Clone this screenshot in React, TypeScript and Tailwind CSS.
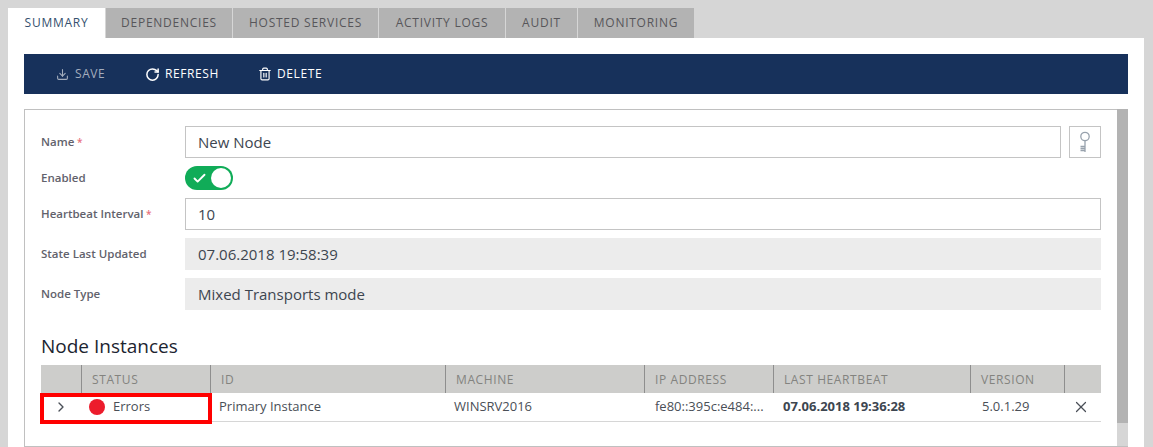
import React from 'react';
import { Check, Download, RotateCw, Trash2, X, ChevronRight } from 'lucide-react';

const font = "font-['Open_Sans','Noto_Sans',sans-serif]";

const tabs = [
  { label: 'SUMMARY', width: 'w-[98px]', active: true },
  { label: 'DEPENDENCIES', width: 'w-[127px]' },
  { label: 'HOSTED SERVICES', width: 'w-[146px]' },
  { label: 'ACTIVITY LOGS', width: 'w-[127px]' },
  { label: 'AUDIT', width: 'w-[72px]' },
  { label: 'MONITORING', width: 'w-[116px]' },
];

const columns = [
  { label: '', cell: 'w-[41px]' },
  { label: 'STATUS', cell: 'w-[129px]' },
  { label: 'ID', cell: 'w-[235px]' },
  { label: 'MACHINE', cell: 'w-[199px]' },
  { label: 'IP ADDRESS', cell: 'w-[129px]' },
  { label: 'LAST HEARTBEAT', cell: 'w-[197px]' },
  { label: 'VERSION', cell: 'w-[94px]' },
  { label: '', cell: 'w-[36px]' },
];

const KeyIcon = () => (
  <svg width="14" height="24" viewBox="0 0 14 24" fill="none" stroke="#98a2ad" strokeWidth="1.3">
    <circle cx="7" cy="6.5" r="4.2" />
    <path d="M7 10.7V22M2.5 16.5H7M2.5 18.5H7M2.5 20.5H7" />
  </svg>
);

const Label = ({ text, required }: { text: string; required?: boolean }) => (
  <div className="w-[144px] shrink-0 text-[11.5px] font-semibold text-[#62626c]">
    {text}
    {required && <span className="text-[10px] text-[#e8707b]"> *</span>}
  </div>
);

const TextField = ({ value }: { value: string }) => (
  <div className="flex h-[32px] flex-1 items-center border border-[#c4c4c4] pl-[12px] text-[15px] text-[#3d4650]">
    {value}
  </div>
);

const ReadonlyField = ({ value }: { value: string }) => (
  <div className="flex h-[32px] flex-1 items-center bg-[#ececec] pl-[13px] text-[15px] text-[#3d4650]">
    {value}
  </div>
);

const App: React.FC = () => {
  return (
    <div className={`${font} h-[447px] w-[1153px] overflow-hidden bg-[#d6d6d6] pl-[8px] pt-[8px]`}>
      <div className="flex h-[30px]">
        {tabs.map((tab, i) => (
          <div
            key={tab.label}
            className={`${tab.width} flex items-center justify-center text-[12px] tracking-[0.75px] ${
              i < tabs.length - 1 ? 'border-r border-[#d6d6d6]' : ''
            } ${tab.active ? 'bg-white text-[#35506e]' : 'bg-[#b3b3b3] text-[#57565a]'}`}
          >
            {tab.label}
          </div>
        ))}
      </div>

      <div className="h-[409px] w-[1136px] bg-white px-[16px] pt-[16px]">
        <div className="flex h-[40px] items-center bg-[#17315b] pl-[32px] text-[12px] font-medium tracking-[0.6px] text-white">
          <div className="flex w-[89px] items-center gap-[6px] text-[#a3adbd]">
            <Download size={13} />
            SAVE
          </div>
          <div className="flex w-[113px] items-center gap-[5px]">
            <RotateCw size={15} strokeWidth={2.4} />
            REFRESH
          </div>
          <div className="flex items-center gap-[5px]">
            <Trash2 size={14} />
            DELETE
          </div>
        </div>

        <div className="mt-[15px] flex h-[338px] border-b border-l border-t border-[#c0c0c0]">
          <div className="flex-1 px-[16px] pt-[16px]">
            <div className="flex h-[32px] items-center">
              <Label text="Name" required />
              <TextField value="New Node" />
              <div className="ml-[8px] flex h-[32px] w-[32px] items-center justify-center border border-[#c4c4c4]">
                <KeyIcon />
              </div>
            </div>

            <div className="mt-[8px] flex h-[24px] items-center">
              <Label text="Enabled" />
              <div className="flex h-[24px] w-[48px] items-center justify-between rounded-full bg-[#10ac58] pl-[7px] pr-[2px]">
                <Check size={15} strokeWidth={3} className="text-white" />
                <div className="h-[20px] w-[20px] rounded-full bg-white" />
              </div>
            </div>

            <div className="mt-[8px] flex h-[32px] items-center">
              <Label text="Heartbeat Interval" required />
              <TextField value="10" />
            </div>

            <div className="mt-[8px] flex h-[32px] items-center">
              <Label text="State Last Updated" />
              <ReadonlyField value="07.06.2018 19:58:39" />
            </div>

            <div className="mt-[8px] flex h-[32px] items-center">
              <Label text="Node Type" />
              <ReadonlyField value="Mixed Transports mode" />
            </div>

            <h3 className="mt-[21px] h-[34px] text-[19px] leading-[30px] text-[#1c2430]">Node Instances</h3>

            <div className="relative">
              <div className="flex h-[28px] bg-[#cdcdcb]">
                {columns.map((col, i) => (
                  <div
                    key={i}
                    className={`${col.cell} flex items-center pl-[10px] pt-[1px] text-[12px] tracking-[0.6px] text-[#83837f] ${
                      i < columns.length - 1 ? 'border-r border-[#8e8e8e]' : ''
                    }`}
                  >
                    {col.label}
                  </div>
                ))}
              </div>

              <div className="flex h-[29px] items-center border-b border-[#d6d6d6] text-[13px] text-[#4a4f57]">
                <div className="flex w-[40px] justify-center">
                  <ChevronRight size={16} />
                </div>
                <div className="flex w-[129px] items-center gap-[8px] pl-[8px]">
                  <span className="h-[16px] w-[16px] rounded-full bg-[#ec1c2c]" />
                  Errors
                </div>
                <div className="w-[235px] pl-[9px]">Primary Instance</div>
                <div className="w-[200px] pl-[9px]">WINSRV2016</div>
                <div className="w-[128px] truncate pl-[10px]">fe80::395c:e484:...</div>
                <div className="w-[198px] pl-[10px] font-bold text-[#3d4650]">07.06.2018 19:36:28</div>
                <div className="w-[93px] pl-[11px]">5.0.1.29</div>
                <div className="flex w-[34px] justify-center">
                  <X size={18} strokeWidth={1.6} />
                </div>
              </div>

              <div className="absolute left-[-1px] top-[28px] h-[31px] w-[172px] border-[4px] border-[#ff0000]" />
            </div>
          </div>

          <div className="-mt-px flex w-[11px] shrink-0 flex-col bg-[#d6d6d6]">
            <div className="h-[314px] bg-[#b3b3b3]" />
          </div>
        </div>
      </div>
    </div>
  );
};

export default App;
